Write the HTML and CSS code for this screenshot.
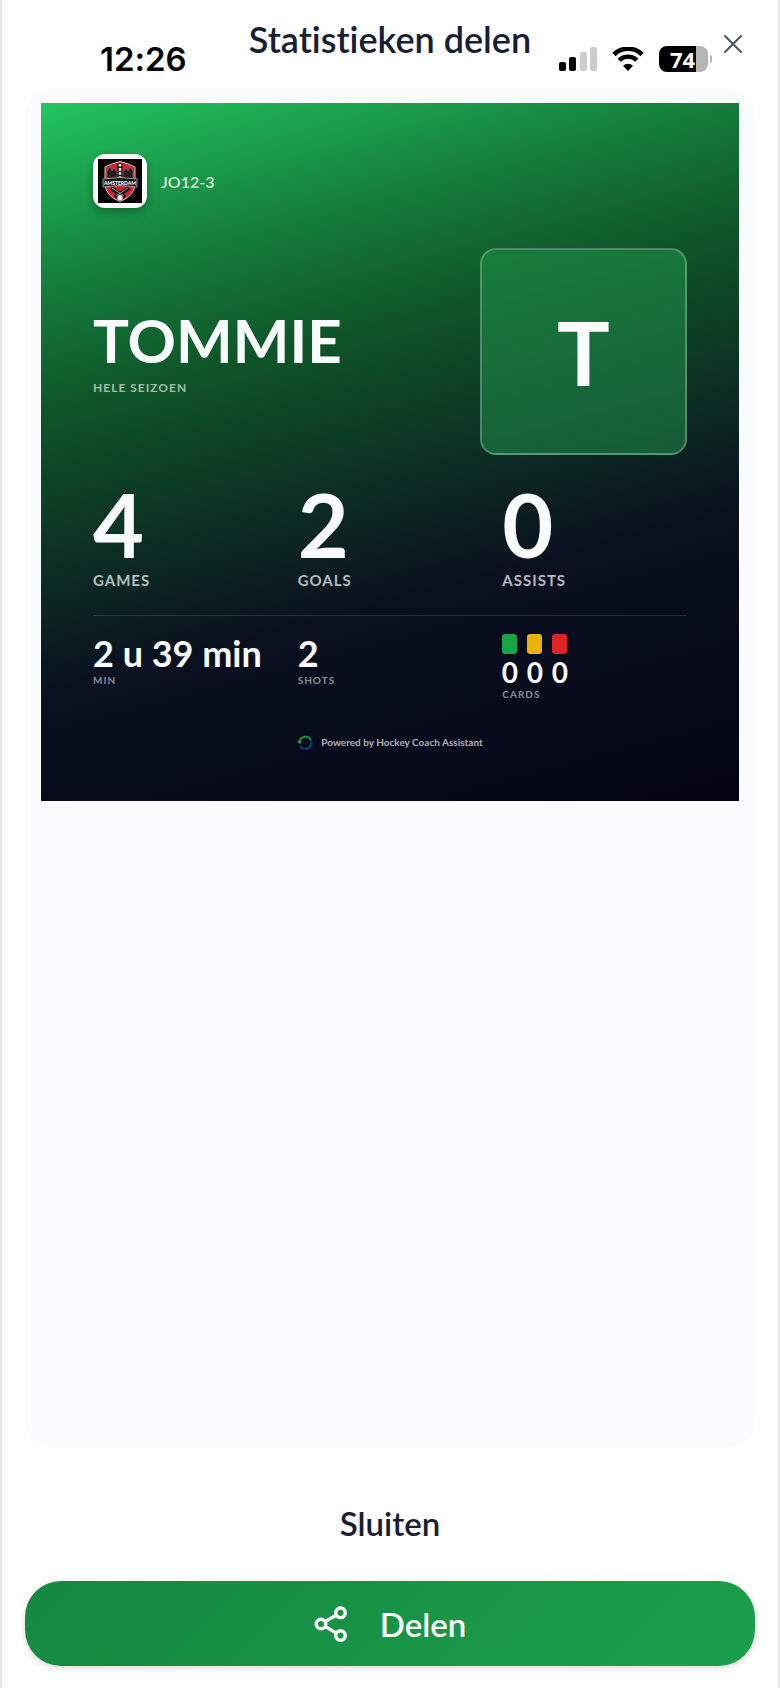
FILE: index.html
```html
<!DOCTYPE html>
<html lang="nl">
<head>
    <meta charset="UTF-8">
    <meta name="viewport" content="width=device-width, initial-scale=1.0">
    <title>Statistieken delen</title>
    <link rel="stylesheet" href="styles.css">
</head>
<body>
    <div class="status-bar">
        <span class="time">12:26</span>
        <div class="status-icons">
            <svg width="38" height="24" viewBox="0 0 38 24">
                <rect x="0" y="15" width="7" height="9" rx="2"/>
                <rect x="10" y="10" width="7" height="14" rx="2"/>
                <rect x="21" y="5" width="7" height="19" rx="2" fill="#ccc"/>
                <rect x="31" y="0" width="7" height="24" rx="2" fill="#ccc"/>
            </svg>
            <svg width="32" height="24" viewBox="0 0 32 24">
                <path d="M2 7.5a20 20 0 0 1 28 0" fill="none" stroke="#000" stroke-width="4.6"/>
                <path d="M7.2 13.2a12.6 12.6 0 0 1 17.6 0" fill="none" stroke="#000" stroke-width="4.4"/>
                <path d="M16 24l-5-5.2a7.2 7.2 0 0 1 10 0z"/>
            </svg>
            <div class="battery"><span>74</span></div>
        </div>
    </div>

    <main class="dialog">
        <header class="dialog-header">
            <h1>Statistieken delen</h1>
            <button type="button" class="close" aria-label="Sluit venster">
                <svg width="18" height="18" viewBox="0 0 18 18" fill="none" stroke="#4b5563" stroke-width="2" stroke-linecap="round">
                    <path d="M1 1l16 16M17 1L1 17"/>
                </svg>
            </button>
        </header>

        <section class="preview">
            <article class="card">
                <div class="team">
                    <div class="team-logo">
                        <svg viewBox="0 0 44 44">
                            <rect width="44" height="44" fill="#050505"/>
                            <path d="M22 2.500Q29 4 37 8v18q-1 11-15 16.500Q8 37 7 26V8q8-4 15-5.500z" fill="#d51f33" stroke="#c9c9c9" stroke-width="1"/>
                            <path d="M9 20v-8l3-4 2 4 2-3 3 4v7zM25 20v-7l3-4 2 3 2-4 3 4v8z" fill="#252020" stroke="#777" stroke-width=".6"/>
                            <path d="M19.500 4.500h5V20h-5z" fill="#111"/>
                            <path d="M22 5v14" stroke="#eee" stroke-width="2.600" stroke-dasharray="2.600 1.500"/>
                            <path d="M13 29l14 9M31 29l-14 9" stroke="#111" stroke-width="4"/>
                            <path d="M14 29l12 8M30 29l-12 8" stroke="#999" stroke-width="1"/>
                            <circle cx="22" cy="38.500" r="2.600" fill="#fff"/>
                            <path d="M5 20q17-3 34 0v8q-17-3-34 0z" fill="#111" stroke="#bbb" stroke-width=".8"/>
                            <text x="22" y="26" text-anchor="middle" class="logo-text">AMSTERDAM</text>
                        </svg>
                    </div>
                    <span class="team-name">JO12-3</span>
                </div>

                <div class="player">
                    <div>
                        <h2>TOMMIE</h2>
                        <p class="period">HELE SEIZOEN</p>
                    </div>
                    <div class="avatar">T</div>
                </div>

                <div class="stats">
                    <div>
                        <div class="big">4</div>
                        <div class="label">GAMES</div>
                    </div>
                    <div>
                        <div class="big">2</div>
                        <div class="label">GOALS</div>
                    </div>
                    <div>
                        <div class="big">0</div>
                        <div class="label">ASSISTS</div>
                    </div>
                </div>

                <div class="stats details">
                    <div>
                        <div class="value">2 u 39 min</div>
                        <div class="small-label">MIN</div>
                    </div>
                    <div>
                        <div class="value">2</div>
                        <div class="small-label">SHOTS</div>
                    </div>
                    <div>
                        <div class="penalties">
                            <div class="penalty"><i class="green"></i>0</div>
                            <div class="penalty"><i class="yellow"></i>0</div>
                            <div class="penalty"><i class="red"></i>0</div>
                        </div>
                        <div class="small-label">CARDS</div>
                    </div>
                </div>

                <footer class="powered">
                    <svg width="16" height="16" viewBox="0 0 16 16" fill="none" stroke-width="2">
                        <path d="M14 9A6 6 0 0 1 3 12" stroke="#173b7a"/>
                        <path d="M3 12A6 6 0 0 0 14 7" stroke="#14305f"/>
                        <path d="M2.500 8A6 6 0 0 1 14 6.500" stroke="#1b8a4b"/>
                        <path d="M0 7h5l-2 3.500z" fill="#1b9a4b"/>
                    </svg>
                    <span>Powered by Hockey Coach Assistant</span>
                </footer>
            </article>
        </section>

        <div class="actions">
            <button type="button" class="btn">Sluiten</button>
            <button type="button" class="btn primary">
                <svg width="34" height="36" viewBox="0 0 34 36" fill="none" stroke="#fff" stroke-width="3.400">
                    <circle cx="7" cy="18" r="4.800"/>
                    <circle cx="26.500" cy="6.800" r="4.800"/>
                    <circle cx="26.500" cy="29.500" r="4.800"/>
                    <path d="M11 15.600l11.500-6.600M11 20.400l11.500 6.700"/>
                </svg>
                Delen
            </button>
        </div>
    </main>
</body>
</html>
```
FILE: styles.css
```css
* {
    box-sizing: border-box;
}

body {
    font-family: Lato, "Open Sans", sans-serif;
    font-variant-ligatures: none;
    background-color: #fefefe;
    color: #172033;
    margin: 0;
}

h1, h2, p {
    margin: 0;
}

button {
    font-family: inherit;
    color: inherit;
    background: none;
    border: none;
    padding: 0;
    cursor: pointer;
}

/* the phone's status bar lies over the dialog header */
.status-bar {
    position: absolute;
    top: 44px;
    left: 0;
    right: 0;
    padding: 0 72px 0 100px;
    display: flex;
    justify-content: space-between;
    align-items: center;
    height: 30px;
    color: #000;
    pointer-events: none;
}

.time {
    font-family: Inter, sans-serif;
    font-size: 33px;
    line-height: 33px;
    font-weight: 600;
}

.status-icons {
    display: flex;
    align-items: center;
    gap: 15px;
}

.battery {
    position: relative;
    width: 49px;
    height: 26px;
    padding-right: 2px;
    border-radius: 8px;
    background: linear-gradient(90deg, #000 75%, #b5b5b5 75%);
    color: #fff;
    font: 700 22px/26px "Open Sans", sans-serif;
    text-align: center;
}

.battery::after {
    content: "";
    position: absolute;
    right: -4px;
    top: 9px;
    width: 2px;
    height: 8px;
    border-radius: 0 2px 2px 0;
    background: #b5b5b5;
}

.dialog {
    min-height: 100vh;
    display: flex;
    flex-direction: column;
    padding: 0 23px 22px;
    border-left: 2px solid #e5e7eb;
    border-right: 2px solid #e5e7eb;
}

.dialog-header {
    height: 88px;
    padding-top: 18px;
    display: grid;
    grid-template-columns: 44px 1fr 44px;
    align-items: start;
}

.dialog-header h1 {
    grid-column: 2;
    font-size: 36px;
    line-height: 42px;
    font-weight: 600;
    text-align: center;
}

.close {
    height: 52px;
    display: flex;
    align-items: center;
    justify-content: center;
}

.preview {
    flex: 1;
    padding: 15px 16px;
    border-radius: 28px;
    background-color: #fafbfd;
}

.card {
    aspect-ratio: 1;
    padding: 51px 52px;
    background: linear-gradient(165deg, #22c55e 0%, #15803d 20%, #0f5528 35%, #0a101f 67%, #020416 100%);
    color: #f8fafc;
}

.team {
    display: flex;
    align-items: center;
    gap: 14px;
}

.team-logo {
    width: 54px;
    height: 54px;
    padding: 5px;
    border-radius: 12px;
    background-color: #fff;
    box-shadow: 0 4px 10px rgba(0, 0, 0, 0.3);
}

.team-logo svg {
    display: block;
}

.logo-text {
    font: 900 5px Lato, sans-serif;
    fill: #fff;
}

.team-name {
    font-size: 16px;
    font-weight: 600;
    color: rgba(248, 250, 252, 0.85);
}

.player {
    margin-top: 40px;
    display: flex;
    align-items: center;
    justify-content: space-between;
}

.player h2 {
    font-size: 60px;
    line-height: 64px;
    font-weight: 700;
}

.period {
    margin-top: 8px;
    font-size: 12px;
    line-height: 16px;
    font-weight: 700;
    letter-spacing: 1px;
    color: rgba(248, 250, 252, 0.65);
}

.avatar {
    width: 207px;
    height: 207px;
    display: flex;
    align-items: center;
    justify-content: center;
    border: 2px solid rgba(255, 255, 255, 0.25);
    border-radius: 16px;
    background: linear-gradient(165deg, #187e3c, #165a37);
    font-size: 88px;
    line-height: 88px;
    font-weight: 700;
}

.stats {
    margin-top: 25px;
    display: grid;
    grid-template-columns: repeat(3, 1fr);
    column-gap: 20px;
}

.big {
    font-size: 88px;
    line-height: 88px;
    font-weight: 700;
}

.label {
    margin-top: 2px;
    font-size: 15px;
    line-height: 20px;
    font-weight: 700;
    letter-spacing: 1px;
    color: rgba(248, 250, 252, 0.72);
}

.details {
    padding-top: 18px;
    border-top: 1px solid rgba(255, 255, 255, 0.12);
}

.value {
    font-size: 36px;
    line-height: 38px;
    font-weight: 700;
    white-space: nowrap;
}

.small-label {
    font-size: 10px;
    line-height: 16px;
    font-weight: 700;
    letter-spacing: 1px;
    color: rgba(248, 250, 252, 0.55);
}

.penalties {
    display: flex;
    gap: 10px;
}

.penalty {
    width: 15px;
    display: flex;
    flex-direction: column;
    align-items: center;
    gap: 4px;
    font-size: 28px;
    line-height: 28px;
    font-weight: 700;
}

.penalty i {
    width: 15px;
    height: 20px;
    border-radius: 3px;
}

.green {
    background-color: #16a34a;
}

.yellow {
    background-color: #eab308;
}

.red {
    background-color: #dc2626;
}

.powered {
    margin-top: 32px;
    display: flex;
    align-items: center;
    justify-content: center;
    gap: 8px;
    font-size: 10px;
    line-height: 16px;
    font-weight: 700;
    color: rgba(248, 250, 252, 0.7);
}

.actions {
    margin-top: 32px;
    display: flex;
    flex-direction: column;
    gap: 16px;
}

.btn {
    height: 85px;
    display: flex;
    align-items: center;
    justify-content: center;
    gap: 32px;
    border-radius: 36px;
    font-size: 33px;
    font-weight: 600;
}

.primary {
    background: linear-gradient(135deg, #15883f, #1b9f4c);
    box-shadow: 0 2px 6px rgba(0, 0, 0, 0.15);
    color: #fff;
}
```
